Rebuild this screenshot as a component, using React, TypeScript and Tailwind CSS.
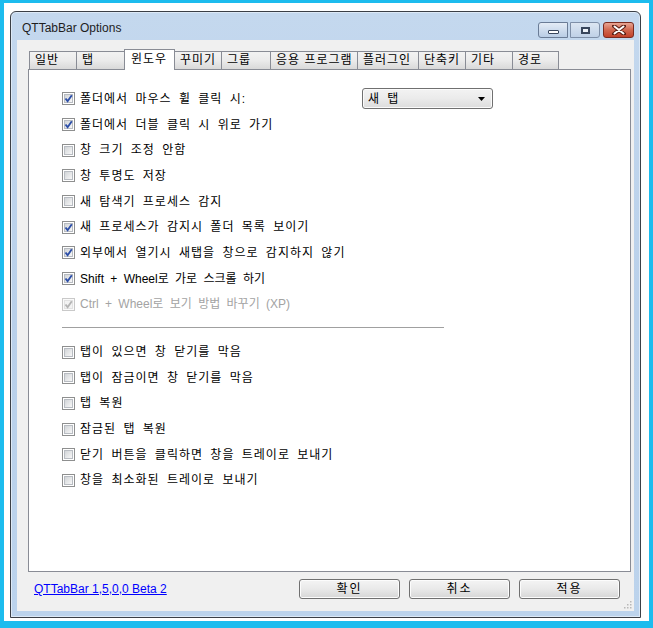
const font = "font-['Liberation_Sans','Noto_Sans_CJK_KR',sans-serif]";

type Row = { label: string; checked?: boolean; disabled?: boolean; latin?: boolean };

const tabs = [
  { name: "일반", w: "w-[48px]" },
  { name: "탭", w: "w-[49px]" },
  { name: "윈도우", w: "w-[51px]", active: true },
  { name: "꾸미기", w: "w-[48px]" },
  { name: "그룹", w: "w-[50px]" },
  { name: "응용 프로그램", w: "w-[88px]" },
  { name: "플러그인", w: "w-[62px]" },
  { name: "단축키", w: "w-[48px]" },
  { name: "기타", w: "w-[48px]" },
  { name: "경로", w: "w-[47px]" },
];

const group1: Row[] = [
  { label: "폴더에서 더블 클릭 시 위로 가기", checked: true },
  { label: "창 크기 조정 안함" },
  { label: "창 투명도 저장" },
  { label: "새 탐색기 프로세스 감지" },
  { label: "새 프로세스가 감지시 폴더 목록 보이기", checked: true },
  { label: "외부에서 열기시 새탭을 창으로 감지하지 않기", checked: true },
  { label: "Shift + Wheel로 가로 스크롤 하기", checked: true, latin: true },
  { label: "Ctrl + Wheel로 보기 방법 바꾸기 (XP)", checked: true, disabled: true, latin: true },
];

const group2: Row[] = [
  { label: "탭이 있으면 창 닫기를 막음" },
  { label: "탭이 잠금이면 창 닫기를 막음" },
  { label: "탭 복원" },
  { label: "잠금된 탭 복원" },
  { label: "닫기 버튼을 클릭하면 창을 트레이로 보내기" },
  { label: "창을 최소화된 트레이로 보내기" },
];

function Box({ checked, disabled }: { checked?: boolean; disabled?: boolean }) {
  return (
    <span
      className={`relative flex h-[13px] w-[13px] shrink-0 items-center justify-center border ${
        disabled ? "border-[#c9c9c9] bg-[#fafafa]" : "border-[#8e8f8f] bg-white"
      }`}
    >
      <span
        className={`h-[9px] w-[9px] border ${
          disabled
            ? "border-[#e2e2e2] bg-[#f3f3f3]"
            : "border-[#b8bcc2] bg-gradient-to-br from-[#d2d5d8] to-[#f7f7f7]"
        }`}
      />
      {checked && (
        <svg className="absolute left-0 top-0" width="11" height="11" viewBox="0 0 11 11">
          <path
            d="M2.5 5.5 L4.6 8.2 L8.8 2.2"
            fill="none"
            stroke={disabled ? "#b4b4b4" : "#2d4fa8"}
            strokeWidth="1.9"
          />
        </svg>
      )}
    </span>
  );
}

function Check({ label, checked, disabled, latin }: Row) {
  return (
    <div className="flex h-[25.7px] items-center gap-[5px]">
      <Box checked={checked} disabled={disabled} />
      <span
        className={`whitespace-nowrap ${latin ? "[word-spacing:3px]" : "tracking-[1px] [word-spacing:3px]"} ${
          disabled ? "text-[#a3a3a3]" : "text-black"
        }`}
      >
        {label}
      </span>
    </div>
  );
}

function DlgButton({ label }: { label: string }) {
  return (
    <button className="flex h-[20px] w-[101px] items-center justify-center rounded-[3px] border border-[#707070] bg-gradient-to-b from-[#f4f4f4] via-[#e9e9e9] to-[#d6d6d6] text-[12px] tracking-[2px] text-black shadow-[inset_0_0_0_1px_#fcfcfc]">
      {label}
    </button>
  );
}

export default function App() {
  return (
    <div className={`h-[628px] w-[653px] bg-[#1cbcee] pb-[7px] pl-[4px] pr-[4px] pt-[3px] ${font} text-[12px]`}>
      <div className="h-full w-full bg-white pb-[3px] pl-[6px] pr-[8px] pt-[8px]">
        {/* 창 프레임 */}
        <div className="flex h-[607px] w-[631px] flex-col rounded-t-[6px] border border-[#3b3f46] bg-gradient-to-b from-[#c4d8ee] via-[#b9d0ea] to-[#bcd3ec] px-[6px] pb-[6px] shadow-[inset_0_0_0_1px_#dde9f6]">
          {/* 타이틀 바 */}
          <div className="flex h-[28px] shrink-0 items-start justify-between">
            <span className="pl-[5px] pt-[9px] text-[12px] leading-[14px] text-[#1e1e1e]">QTTabBar Options</span>
            <div className="flex pt-[10px]">
              <div className="flex h-[16px] w-[30px] items-end justify-center rounded-l-[3px] border border-[#6a7c96] bg-gradient-to-b from-[#e4ecf6] to-[#b9cde5] pb-[3px]">
                <span className="h-[4px] w-[11px] rounded-[1px] border border-[#38465c] bg-white" />
              </div>
              <div className="ml-[2px] flex h-[16px] w-[30px] items-center justify-center rounded-r-[3px] border border-[#7e8fa8] bg-gradient-to-b from-[#dce6f2] to-[#bfd1e7]">
                <span className="h-[7px] w-[9px] border border-[#38465c] bg-[#eef3f9] shadow-[inset_0_0_0_1px_#38465c]" />
              </div>
              <div className="ml-[3px] flex h-[16px] w-[31px] items-center justify-center rounded-[3px] border border-[#7a2a1f] bg-gradient-to-b from-[#e8a493] via-[#d0664e] to-[#c2412a]">
                <svg width="14" height="10" viewBox="0 0 14 10">
                  <path d="M2 1 L12 9 M12 1 L2 9" stroke="#5a1f16" strokeWidth="4" strokeLinecap="round" />
                  <path d="M2.5 1.5 L11.5 8.5 M11.5 1.5 L2.5 8.5" stroke="#ffffff" strokeWidth="2" strokeLinecap="round" />
                </svg>
              </div>
            </div>
          </div>

          {/* 클라이언트 영역 */}
          <div className="relative flex flex-1 flex-col bg-[#f0f0f0] pl-[11px] pr-[3px]">
            {/* 탭 */}
            <div className="relative z-10 mt-[9px] flex h-[20px] items-end pl-[2px]">
              {tabs.map((t) =>
                t.active ? (
                  <div
                    key={t.name}
                    className={`-mb-px -ml-px h-[21px] ${t.w} border border-b-0 border-[#898c95] bg-white pl-[6px] pt-[2px] text-[12px] leading-[15px] tracking-[1px]`}
                  >
                    {t.name}
                  </div>
                ) : (
                  <div
                    key={t.name}
                    className={`-ml-px h-[18px] ${t.w} whitespace-nowrap border border-b-0 border-[#898c95] bg-gradient-to-b from-[#f2f2f2] via-[#ebebeb] to-[#d9d9d9] pl-[5px] pt-[1px] text-[12px] leading-[15px] tracking-[1px]`}
                  >
                    {t.name}
                  </div>
                )
              )}
            </div>

            {/* 탭 패널 */}
            <div className="h-[503px] w-[603px] border border-[#898c95] bg-white pl-[33px] pt-[16px]">
              <div className="flex h-[25.7px] items-center">
                <div className="flex w-[300px] items-center gap-[5px]">
                  <Box checked />
                  <span className="whitespace-nowrap tracking-[1px] [word-spacing:3px]">폴더에서 마우스 휠 클릭 시:</span>
                </div>
                <div className="flex h-[21px] w-[131px] items-center justify-between rounded-[3px] border border-[#707070] bg-gradient-to-b from-[#f3f3f3] via-[#ebebeb] to-[#dcdcdc] pl-[5px] pr-[7px] shadow-[inset_0_0_0_1px_#fbfbfb]">
                  <span className="tracking-[1px] [word-spacing:3px]">새 탭</span>
                  <svg width="7" height="4" viewBox="0 0 7 4">
                    <path d="M0 0 H7 L3.5 4 Z" fill="#000" />
                  </svg>
                </div>
              </div>
              {group1.map((r) => (
                <Check key={r.label} {...r} />
              ))}
              <div className="mb-[11px] mt-[10px] h-px w-[382px] bg-[#a0a0a0]" />
              {group2.map((r) => (
                <Check key={r.label} {...r} />
              ))}
            </div>

            {/* 하단 */}
            <div className="mt-[7px] flex items-center">
              <a href="#" className="ml-[6px] text-[12px] leading-[14px] text-[#0000ff] underline">
                QTTabBar 1,5,0,0 Beta 2
              </a>
              <div className="ml-auto mr-[11px] flex gap-[9px]">
                <DlgButton label="확인" />
                <DlgButton label="취소" />
                <DlgButton label="적용" />
              </div>
            </div>

            {/* 크기 조절 그립 */}
            <svg className="absolute bottom-[2px] right-[2px]" width="10" height="10" viewBox="0 0 10 10">
              {[
                [8, 2],
                [8, 5],
                [5, 5],
                [8, 8],
                [5, 8],
                [2, 8],
              ].map(([x, y]) => (
                <rect key={`${x}-${y}`} x={x} y={y} width="1.5" height="1.5" fill="#b8b8b8" />
              ))}
            </svg>
          </div>
        </div>
      </div>
    </div>
  );
}
